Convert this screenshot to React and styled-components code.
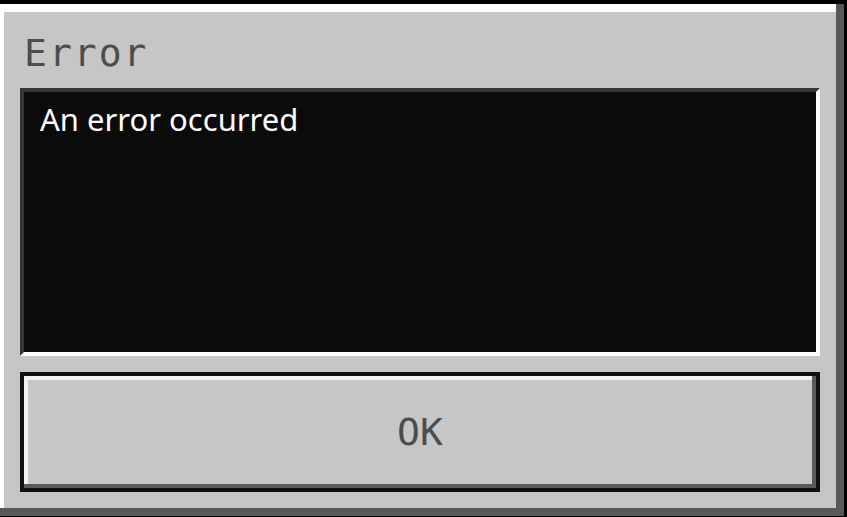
import styled, { createGlobalStyle } from 'styled-components';

const GlobalStyle = createGlobalStyle`
  html, body {
    margin: 0;
    padding: 0;
    overflow: hidden;
    background: #000;
  }
`;

const pixelFont = `"DejaVu Sans Mono", "Liberation Mono", monospace`;

const Frame = styled.div`
  box-sizing: border-box;
  margin-left: -8px;
  width: 856px;
  height: 520px;
  border: 4px solid #000;
  background: #c6c6c6;
  box-shadow: inset -8px -8px 0 #585858, inset 8px 8px 0 #fff;
  padding: 24px;
  display: flex;
  flex-direction: column;
`;

const Title = styled.div`
  height: 60px;
  line-height: 50px;
  padding-left: 4px;
  font-family: ${pixelFont};
  font-size: 38px;
  letter-spacing: 2px;
  color: #4c4c4c;
`;

const MessageBox = styled.div`
  box-sizing: border-box;
  height: 268px;
  border-style: solid;
  border-width: 4px;
  border-color: #373737 #fff #fff #373737;
  background: #0b0b0b;
  padding: 6px 16px;
  font-family: "Noto Sans", "Open Sans", sans-serif;
  font-size: 31px;
  color: #fff;
`;

const Button = styled.button`
  box-sizing: border-box;
  margin-top: 16px;
  height: 120px;
  width: 100%;
  border: 4px solid #111;
  background: #c6c6c6;
  box-shadow: inset -4px -4px 0 #5a5a5a, inset 4px 4px 0 #f2f2f2;
  font-family: ${pixelFont};
  font-size: 38px;
  color: #4c4c4c;
  cursor: pointer;
  padding: 0;
`;

export default function App() {
  return (
    <>
      <GlobalStyle />
      <Frame>
        <Title>Error</Title>
        <MessageBox>An error occurred</MessageBox>
        <Button>OK</Button>
      </Frame>
    </>
  );
}
